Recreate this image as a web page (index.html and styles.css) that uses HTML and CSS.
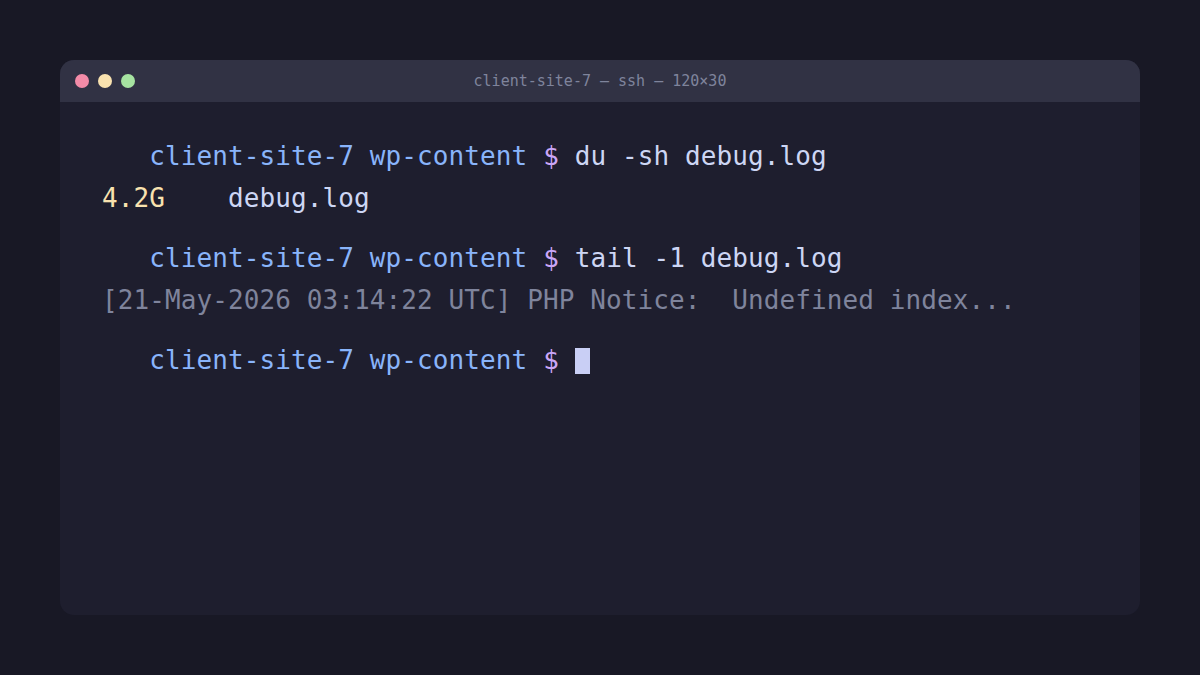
FILE: index.html
```html
<!DOCTYPE html>
<html lang="en">
<head>
<meta charset="utf-8">
<title>client-site-7 — ssh — 120×30</title>
<link rel="stylesheet" href="styles.css">
</head>
<body>
<div class="window">
  <div class="titlebar">
    <div class="dots">
      <span class="dot red"></span>
      <span class="dot yellow"></span>
      <span class="dot green"></span>
    </div>
    <div class="title">client-site-7 — ssh — 120×30</div>
  </div>
  <div class="term">
    <div class="block">
      <div class="line">   <span class="path">client-site-7 wp-content</span> <span class="sign">$</span> <span class="cmd">du -sh debug.log</span></div>
      <div class="line"><span class="size">4.2G</span><span class="cmd">    debug.log</span></div>
    </div>
    <div class="block">
      <div class="line">   <span class="path">client-site-7 wp-content</span> <span class="sign">$</span> <span class="cmd">tail -1 debug.log</span></div>
      <div class="line"><span class="dim">[21-May-2026 03:14:22 UTC] PHP Notice:  Undefined index...</span></div>
    </div>
    <div class="block">
      <div class="line">   <span class="path">client-site-7 wp-content</span> <span class="sign">$</span> <span class="cursor"></span></div>
    </div>
  </div>
</div>
</body>
</html>
```

FILE: styles.css
```css
* { box-sizing: border-box; }
html, body {
  margin: 0;
  padding: 0;
  width: 1200px;
  height: 675px;
  background: #181825;
  overflow: hidden;
}
body {
  padding: 60px;
  font-family: "DejaVu Sans Mono", "Liberation Mono", monospace;
}
.window {
  width: 1080px;
  height: 555px;
  background: #1e1e2e;
  border-radius: 14px;
  overflow: hidden;
}
.titlebar {
  height: 42px;
  background: #313244;
  display: flex;
  align-items: center;
  position: relative;
  padding-left: 15px;
}
.dots {
  display: flex;
  gap: 9px;
}
.dot {
  width: 14px;
  height: 14px;
  border-radius: 50%;
  display: block;
}
.red { background: #f38ba8; }
.yellow { background: #f9e2af; }
.green { background: #a6e3a1; }
.title {
  position: absolute;
  left: 0;
  right: 0;
  text-align: center;
  font-size: 15px;
  color: #7f849c;
  pointer-events: none;
}
.term {
  padding: 33px 42px;
  font-size: 26px;
  letter-spacing: 0.1px;
}
.block + .block { margin-top: 18px; }
.line {
  height: 42px;
  line-height: 42px;
  white-space: pre;
}
.path { color: #89b4fa; }
.sign { color: #cba6f7; }
.cmd { color: #cdd6f4; }
.size { color: #f9e2af; }
.dim { color: #7f849c; }
.cursor {
  display: inline-block;
  width: 15px;
  height: 26px;
  background: #c9cff5;
  vertical-align: -5px;
}
```
